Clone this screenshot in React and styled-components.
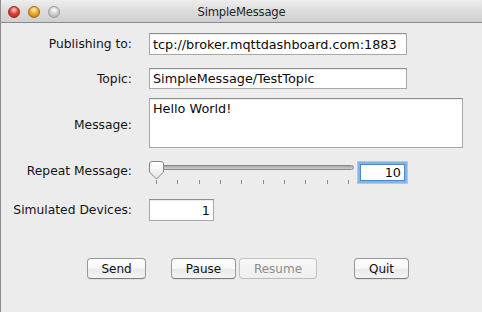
import React from "react";
import styled, { createGlobalStyle } from "styled-components";

const GlobalStyle = createGlobalStyle`
  html, body {
    margin: 0;
    background: #ececec;
  }
  * {
    box-sizing: border-box;
  }
`;

const Window = styled.div`
  width: 482px;
  height: 312px;
  background: #ececec;
  border-left: 1px solid #8e8e8e;
  overflow: hidden;
  font-family: "DejaVu Sans", "Liberation Sans", sans-serif;
  color: #111;
`;

const TitleBar = styled.div`
  height: 23px;
  display: grid;
  grid-template-columns: 1fr auto 1fr;
  align-items: center;
  background: linear-gradient(#ededed, #dcdcdc 50%, #cfcfcf);
  border-bottom: 1px solid #8a8a8a;
`;

const Lights = styled.div`
  display: flex;
  gap: 8px;
  padding-left: 7px;
  padding-top: 1px;
`;

const lightColors = {
  red: ["#ffd2cc", "#e3453d", "#a81a13", "#8f2a22"],
  yellow: ["#fff0b8", "#efab2c", "#b8720c", "#9a6a1e"],
  gray: ["#ffffff", "#d2d2d2", "#a9a9a9", "#9c9c9c"],
};

const Light = styled.span`
  width: 12px;
  height: 12px;
  border-radius: 50%;
  border: 1px solid ${(p) => lightColors[p.$color][3]};
  background: radial-gradient(
    circle at 50% 30%,
    ${(p) => lightColors[p.$color][0]} 0,
    ${(p) => lightColors[p.$color][1]} 45%,
    ${(p) => lightColors[p.$color][2]} 100%
  );
`;

const Title = styled.div`
  font-size: 11.6px;
  color: #262626;
  padding-top: 2px;
  letter-spacing: -0.2px;
`;

const Content = styled.div`
  padding-top: 10px;
`;

const Row = styled.div`
  display: flex;
  align-items: center;
  margin-top: ${(p) => p.$top || 0}px;
`;

const Label = styled.div`
  width: 131px;
  flex: none;
  text-align: right;
  font-size: 12.3px;
  color: #141414;
  margin-top: ${(p) => p.$shift || 0}px;
`;

const TextField = styled.input`
  margin-left: 17px;
  width: ${(p) => p.$width}px;
  height: ${(p) => p.$height || 22}px;
  border: 1px solid #a8a8a8;
  border-top-color: #8e8e8e;
  box-shadow: inset 0 1px 1px rgba(0, 0, 0, 0.08);
  background: #fff;
  padding: 0 3px;
  font-family: "DejaVu Sans", "Liberation Sans", sans-serif;
  font-size: 12.8px;
  color: #0a0a0a;
  text-align: ${(p) => p.$align || "left"};
  outline: none;
`;

const TextArea = styled.textarea`
  margin-left: 17px;
  width: 314px;
  height: 50px;
  border: 1px solid #a8a8a8;
  border-top-color: #8e8e8e;
  box-shadow: inset 0 1px 1px rgba(0, 0, 0, 0.08);
  background: #fff;
  padding: 2px 3px;
  font-family: "DejaVu Sans", "Liberation Sans", sans-serif;
  font-size: 12.8px;
  color: #0a0a0a;
  resize: none;
  outline: none;
`;

const Slider = styled.div`
  position: relative;
  margin-left: 16px;
  width: 209px;
  height: 23px;
`;

const Track = styled.div`
  position: absolute;
  left: 3px;
  right: 3px;
  top: 4px;
  height: 5px;
  border-radius: 3px;
  border: 1px solid #8a8a8a;
  background: linear-gradient(#a8a8a8, #cfcfcf);
`;

const Knob = styled.svg`
  position: absolute;
  left: 0;
  top: 0;
`;

const Ticks = styled.div`
  position: absolute;
  left: 8px;
  width: 193px;
  top: 19px;
  height: 4px;
  display: flex;
  justify-content: space-between;
`;

const Tick = styled.span`
  width: 1px;
  height: 4px;
  background: #8c8c8c;
`;

const NumberField = styled.input`
  margin-left: 3px;
  width: 45px;
  height: 17px;
  border: 1px solid #4f86c4;
  box-shadow: 0 0 0 2px #86b4e2, 0 0 0 3px rgba(134, 180, 226, 0.6);
  background: #fff;
  padding: 0 3px;
  font-family: "DejaVu Sans", "Liberation Sans", sans-serif;
  font-size: 12.8px;
  color: #0a0a0a;
  text-align: right;
  outline: none;
`;

const ButtonBar = styled.div`
  display: flex;
  margin-top: 37px;
  padding-left: 86px;
`;

const Button = styled.button`
  margin-left: ${(p) => p.$gap || 0}px;
  width: ${(p) => p.$width}px;
  height: 21px;
  padding: 0;
  border-radius: 4px;
  border: 1px solid ${(p) => (p.disabled ? "#c2c2c2" : "#989898")};
  border-bottom-color: ${(p) => (p.disabled ? "#bcbcbc" : "#7e7e7e")};
  background: ${(p) =>
    p.disabled
      ? "linear-gradient(#f7f7f7, #efefef)"
      : "linear-gradient(#ffffff, #f6f6f6 50%, #e9e9e9 51%, #f3f3f3)"};
  box-shadow: ${(p) => (p.disabled ? "none" : "0 1px 0 rgba(0,0,0,0.06)")};
  font-family: "DejaVu Sans", "Liberation Sans", sans-serif;
  font-size: 12px;
  color: ${(p) => (p.disabled ? "#8b8b8b" : "#111")};
`;

const ticks = Array.from({ length: 10 }, (_, i) => i);

export default function App() {
  return (
    <>
      <GlobalStyle />
      <Window>
        <TitleBar>
          <Lights>
            <Light $color="red" />
            <Light $color="yellow" />
            <Light $color="gray" />
          </Lights>
          <Title>SimpleMessage</Title>
          <div />
        </TitleBar>
        <Content>
          <Row>
            <Label>Publishing to:</Label>
            <TextField
              $width={258}
              readOnly
              value="tcp://broker.mqttdashboard.com:1883"
            />
          </Row>
          <Row $top={13}>
            <Label>Topic:</Label>
            <TextField
              $width={258}
              $height={21}
              readOnly
              value="SimpleMessage/TestTopic"
            />
          </Row>
          <Row $top={9}>
            <Label $shift={3}>Message:</Label>
            <TextArea readOnly value="Hello World!" />
          </Row>
          <Row $top={13}>
            <Label $shift={-4}>Repeat Message:</Label>
            <Slider>
              <Track />
              <Knob width="17" height="19" viewBox="0 0 17 19">
                <defs>
                  <linearGradient id="knobFill" x1="0" y1="0" x2="0" y2="1">
                    <stop offset="0" stopColor="#ffffff" />
                    <stop offset="1" stopColor="#e6e6e6" />
                  </linearGradient>
                </defs>
                <path
                  d="M1.5 3 Q1.5 0.5 4 0.5 H13 Q15.5 0.5 15.5 3 V11 L8.5 18 L1.5 11 Z"
                  fill="url(#knobFill)"
                  stroke="#858585"
                />
              </Knob>
              <Ticks>
                {ticks.map((t) => (
                  <Tick key={t} />
                ))}
              </Ticks>
            </Slider>
            <NumberField readOnly value="10" />
          </Row>
          <Row $top={15}>
            <Label>Simulated Devices:</Label>
            <TextField $width={65} $align="right" readOnly value="1" />
          </Row>
          <ButtonBar>
            <Button $width={59}>Send</Button>
            <Button $width={65} $gap={25}>
              Pause
            </Button>
            <Button $width={78} $gap={3} disabled>
              Resume
            </Button>
            <Button $width={55} $gap={37}>
              Quit
            </Button>
          </ButtonBar>
        </Content>
      </Window>
    </>
  );
}
